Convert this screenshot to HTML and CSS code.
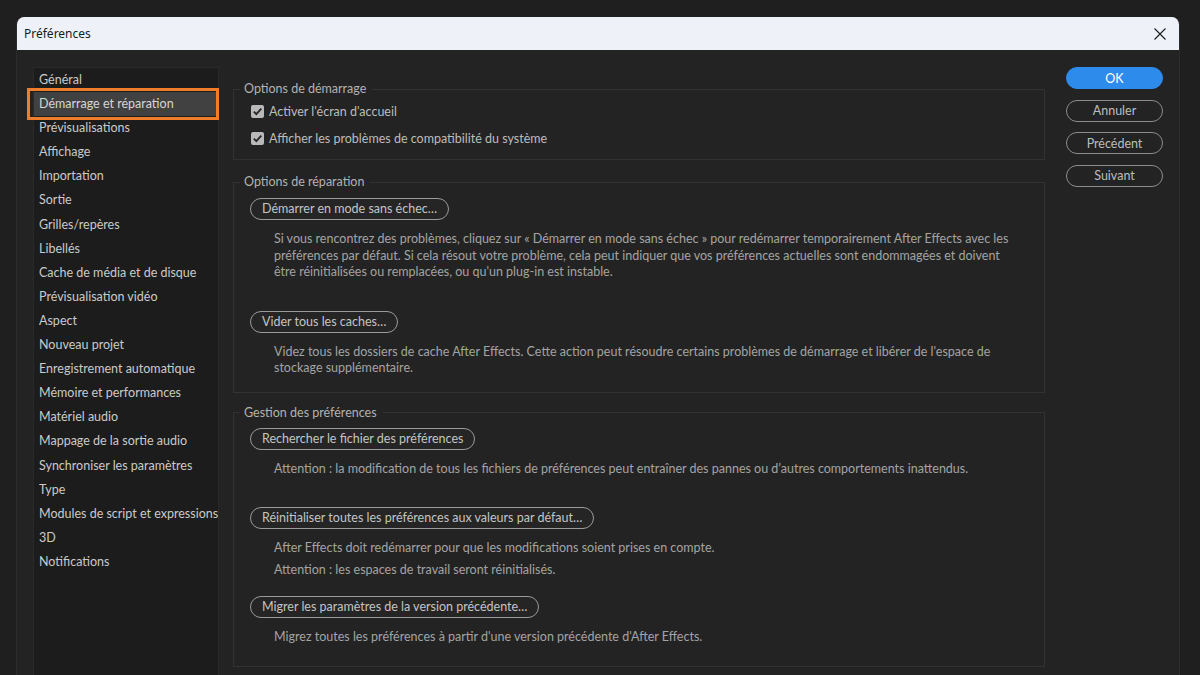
FILE: index.html
```html
<!DOCTYPE html>
<html lang="fr">
<head>
    <meta charset="UTF-8">
    <meta name="viewport" content="width=device-width, initial-scale=1.0">
    <title>Préférences</title>
    <link rel="stylesheet" href="styles.css">
</head>
<body>
    <div class="dialog">
        <div class="titlebar">
            <span class="title">Préférences</span>
            <svg class="close" width="12" height="12" viewBox="0 0 12 12">
                <path d="M0.5 0.5 L11.5 11.5 M11.5 0.5 L0.5 11.5" stroke="#1b1b1b" stroke-width="1.1" fill="none"/>
            </svg>
        </div>

        <div class="dialog-body">
            <ul class="sidebar">
                <li>Général</li>
                <li class="selected">Démarrage et réparation</li>
                <li>Prévisualisations</li>
                <li>Affichage</li>
                <li>Importation</li>
                <li>Sortie</li>
                <li>Grilles/repères</li>
                <li>Libellés</li>
                <li>Cache de média et de disque</li>
                <li>Prévisualisation vidéo</li>
                <li>Aspect</li>
                <li>Nouveau projet</li>
                <li>Enregistrement automatique</li>
                <li>Mémoire et performances</li>
                <li>Matériel audio</li>
                <li>Mappage de la sortie audio</li>
                <li>Synchroniser les paramètres</li>
                <li>Type</li>
                <li>Modules de script et expressions</li>
                <li>3D</li>
                <li>Notifications</li>
            </ul>

            <div class="content">
                <fieldset class="group group-startup">
                    <legend>Options de démarrage</legend>
                    <label class="check">
                        <span class="box">
                            <svg width="11" height="11" viewBox="0 0 11 11"><path d="M1.8 5.6 L4.3 8.1 L9.3 2.6" stroke="#262626" stroke-width="1.8" fill="none"/></svg>
                        </span>
                        Activer l'écran d'accueil
                    </label>
                    <label class="check">
                        <span class="box">
                            <svg width="11" height="11" viewBox="0 0 11 11"><path d="M1.8 5.6 L4.3 8.1 L9.3 2.6" stroke="#262626" stroke-width="1.8" fill="none"/></svg>
                        </span>
                        Afficher les problèmes de compatibilité du système
                    </label>
                </fieldset>

                <fieldset class="group group-repair">
                    <legend>Options de réparation</legend>
                    <button class="pill">Démarrer en mode sans échec…</button>
                    <p class="note">Si vous rencontrez des problèmes, cliquez sur « Démarrer en mode sans échec » pour redémarrer temporairement After Effects avec les préférences par défaut. Si cela résout votre problème, cela peut indiquer que vos préférences actuelles sont endommagées et doivent être réinitialisées ou remplacées, ou qu'un plug-in est instable.</p>
                    <button class="pill gap">Vider tous les caches…</button>
                    <p class="note">Videz tous les dossiers de cache After Effects. Cette action peut résoudre certains problèmes de démarrage et libérer de l'espace de stockage supplémentaire.</p>
                </fieldset>

                <fieldset class="group group-prefs">
                    <legend>Gestion des préférences</legend>
                    <button class="pill">Rechercher le fichier des préférences</button>
                    <p class="note">Attention : la modification de tous les fichiers de préférences peut entraîner des pannes ou d’autres comportements inattendus.</p>
                    <button class="pill gap">Réinitialiser toutes les préférences aux valeurs par défaut…</button>
                    <p class="note">After Effects doit redémarrer pour que les modifications soient prises en compte.</p>
                    <p class="note tight">Attention : les espaces de travail seront réinitialisés.</p>
                    <button class="pill gap-small">Migrer les paramètres de la version précédente…</button>
                    <p class="note">Migrez toutes les préférences à partir d'une version précédente d'After Effects.</p>
                </fieldset>
            </div>

            <div class="actions">
                <button class="action primary">OK</button>
                <button class="action">Annuler</button>
                <button class="action">Précédent</button>
                <button class="action">Suivant</button>
            </div>
        </div>
    </div>
</body>
</html>
```

FILE: styles.css
```css
body {
    margin: 0;
    padding: 17px 20px 0 16px;
    background-color: #1f1f1f;
    font-family: Lato, "Liberation Sans", sans-serif;
    font-size: 12.5px;
    height: 675px;
    box-sizing: border-box;
    overflow: hidden;
}

.dialog {
    width: 1164px;
    height: 658px;
    background-color: #232323;
    border-left: 1px solid #2c2c2c;
    border-right: 1px solid #2c2c2c;
    border-radius: 8px 8px 0 0;
    box-sizing: border-box;
    overflow: hidden;
}

.titlebar {
    height: 33px;
    background-color: #eef2f8;
    display: flex;
    align-items: center;
    justify-content: space-between;
    padding: 0 13px 0 7px;
}

.title {
    font-family: "Noto Sans", "Open Sans", sans-serif;
    font-size: 12px;
    color: #1a1a1a;
}

.close {
    display: block;
}

.dialog-body {
    display: flex;
    align-items: flex-start;
    padding: 17px 0 0 16px;
}

/* left category list */
.sidebar {
    list-style: none;
    margin: 0;
    padding: 0;
    width: 186px;
    height: 620px;
    box-sizing: border-box;
    background-color: #1c1c1c;
    border: 1px solid #2a2a2a;
    flex-shrink: 0;
}

.sidebar li {
    height: 24.1px;
    line-height: 24px;
    padding-left: 5px;
    color: #cacaca;
    white-space: nowrap;
}

.sidebar li.selected {
    position: relative;
    background-color: #414141;
    color: #d6d6d6;
}

.sidebar li.selected::after {
    content: "";
    position: absolute;
    top: -4px;
    bottom: -4px;
    left: -7px;
    right: -1px;
    border: 3px solid #f07d2a;
}

/* content groups */
.content {
    width: 812px;
    margin-left: 14px;
    flex-shrink: 0;
    margin-top: 14px;
}

.group {
    margin: 0;
    padding: 0 16px;
    border: 1px solid #323232;
    color: #b4b4b4;
}

.group legend {
    margin-left: -10px;
    padding: 0 6px 0 4px;
    line-height: 16px;
    color: #b2b2b2;
}

.group-startup {
    padding-top: 4px;
    padding-bottom: 11px;
}

.group-repair {
    margin-top: 14px;
    padding-top: 8px;
    padding-bottom: 15px;
}

.group-prefs {
    margin-top: 12px;
    padding-top: 7px;
    padding-bottom: 20px;
}

.check {
    display: flex;
    align-items: center;
    height: 20px;
    margin-left: 1px;
    color: #bcbcbc;
}

.check + .check {
    margin-top: 7px;
}

.check .box {
    width: 13px;
    height: 13px;
    border-radius: 2px;
    background-color: #b9b9b9;
    display: flex;
    align-items: center;
    justify-content: center;
    margin-right: 5px;
}

.pill {
    display: block;
    height: 22px;
    padding: 0 11px;
    border: 1px solid #9a9a9a;
    border-radius: 11px;
    background-color: #252525;
    color: #c4c4c4;
    font-family: inherit;
    font-size: 12.5px;
    line-height: 20px;
}

.pill.gap {
    margin-top: 30px;
}

.pill.gap-small {
    margin-top: 18px;
}

.note {
    margin: 11px 0 0 24px;
    line-height: 16.5px;
    color: #a3a3a3;
    max-width: 750px;
}

.note.tight {
    margin-top: 5px;
}

/* right action buttons */
.actions {
    display: flex;
    flex-direction: column;
    gap: 10.5px;
    margin-left: 21px;
    width: 97px;
}

.action {
    height: 22px;
    border: 1px solid #8c8c8c;
    border-radius: 11px;
    background-color: #232323;
    color: #bdbdbd;
    font-family: inherit;
    font-size: 12.5px;
    padding: 0;
}

.action.primary {
    background-color: #2d8ceb;
    border-color: #2d8ceb;
    color: #ffffff;
}
```
